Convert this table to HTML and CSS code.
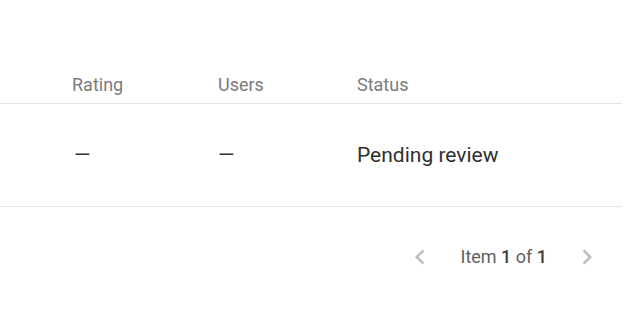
FILE: index.html
```html
<!DOCTYPE html>
<html lang="en">
<head>
    <meta charset="UTF-8">
    <meta name="viewport" content="width=device-width, initial-scale=1.0">
    <title>Items</title>
    <link rel="stylesheet" href="styles.css">
</head>
<body>
    <div class="container">
        <div class="table">
            <div class="row head">
                <div class="cell">Rating</div>
                <div class="cell">Users</div>
                <div class="cell">Status</div>
            </div>
            <div class="row body">
                <div class="cell">—</div>
                <div class="cell">—</div>
                <div class="cell">Pending review</div>
            </div>
        </div>

        <div class="pager">
            <svg class="chev" viewBox="0 0 24 24"><path d="M15.41 7.41L14 6l-6 6 6 6 1.41-1.41L10.83 12z"/></svg>
            <span class="count">Item <b>1</b> of <b>1</b></span>
            <svg class="chev" viewBox="0 0 24 24"><path d="M10 6L8.59 7.41 13.17 12l-4.58 4.59L10 18l6-6z"/></svg>
        </div>
    </div>
</body>
</html>
```

FILE: styles.css
```css
body {
    margin: 0;
    font-family: Roboto, "Liberation Sans", sans-serif;
    background: #fff;
}

.container {
    padding-top: 73px;
    padding-right: 18px;
}

.row {
    display: grid;
    grid-template-columns: 72px 146px 139px 1fr;
    border-bottom: 1px solid #e4e4e4;
}

.row .cell:first-child {
    grid-column: 2;
}

.head {
    font-size: 18px;
    line-height: 24px;
    color: #7b7b7b;
    padding-bottom: 6px;
}

.body {
    font-size: 21px;
    line-height: 28px;
    color: #303030;
    padding: 37px 0;
}

.body .cell:first-child {
    padding-left: 2px;
}

.pager {
    display: flex;
    justify-content: flex-end;
    align-items: center;
    gap: 25px;
    margin-top: 35px;
    margin-right: 20px;
}

.chev {
    width: 30px;
    height: 30px;
    fill: #bdbdbd;
}

.count {
    font-size: 18px;
    line-height: 24px;
    color: #616161;
}

.count b {
    font-weight: 500;
    color: #424242;
}
```
